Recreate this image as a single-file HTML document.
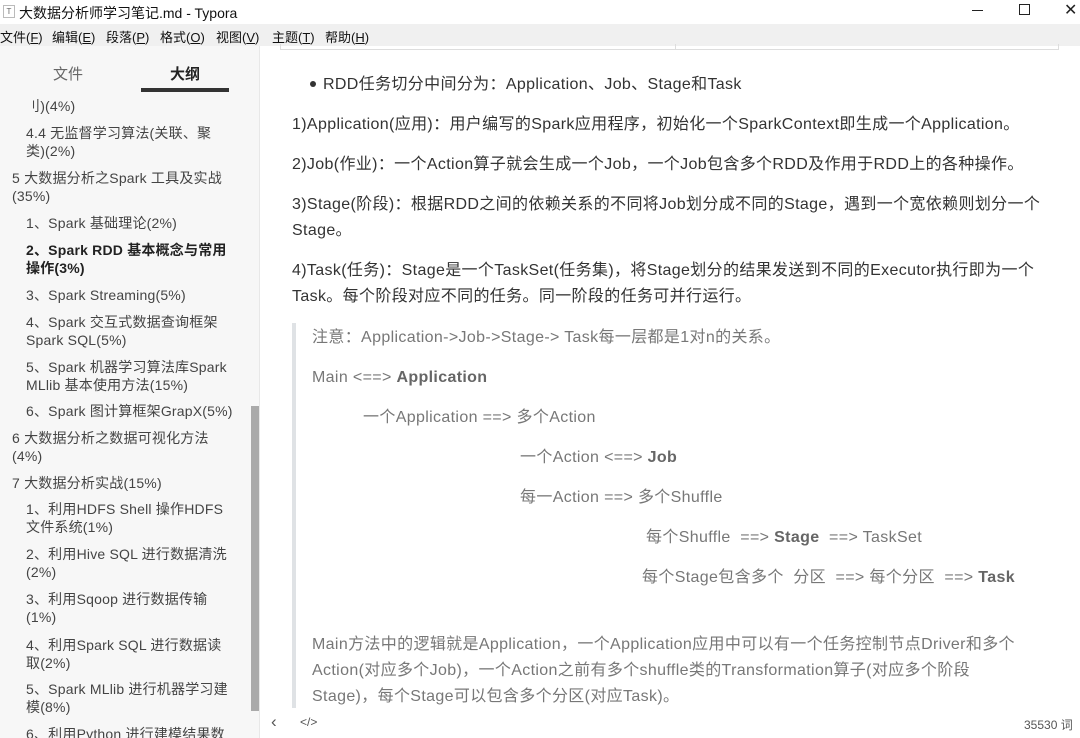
<!DOCTYPE html>
<html><head><meta charset="utf-8"><style>
*{margin:0;padding:0;box-sizing:border-box}
body{width:1080px;height:738px;overflow:hidden;background:#fff;font-family:"Liberation Sans","Noto Sans CJK SC",sans-serif;position:relative;color:#333}
.a{position:absolute;white-space:nowrap}
#title{top:0;left:0;width:1080px;height:24px;background:#fff}
#menu{top:24px;left:0;width:1080px;height:22px;background:#f0f0f0;font-size:13px;color:#111}
#side{top:46px;left:0;width:260px;height:692px;background:#f7f7f7;border-right:1px solid #e8e8e8;overflow:hidden}
.s{position:absolute;left:26px;font-size:14px;line-height:18px;color:#444;white-space:nowrap;letter-spacing:0.2px}
.s1{left:12px}
.b{font-weight:bold;color:#222}
.c{position:absolute;font-size:16px;line-height:26px;color:#333;white-space:nowrap;letter-spacing:0.35px}
.q{color:#777}
</style></head><body>
<div class="a" id="title">
 <div class="a" style="left:3px;top:5px;width:12px;height:13px;border:1px solid #bbb;font-size:8px;text-align:center;line-height:11px;color:#666">T</div>
 <div class="a" style="left:19px;top:3px;font-size:14px;color:#111">大数据分析师学习笔记.md - Typora</div>
 <div class="a" style="left:972px;top:10px;width:11px;height:1px;background:#222"></div>
 <div class="a" style="left:1019px;top:4px;width:11px;height:11px;border:1px solid #222"></div>
 <div class="a" style="left:1064px;top:0px;font-size:16px;color:#222">✕</div>
</div>
<div class="a" id="menu">
 <span class="a" style="left:0;top:3px">文件(<u>F</u>)</span>
 <span class="a" style="left:52px;top:3px">编辑(<u>E</u>)</span>
 <span class="a" style="left:106px;top:3px">段落(<u>P</u>)</span>
 <span class="a" style="left:160px;top:3px">格式(<u>O</u>)</span>
 <span class="a" style="left:216px;top:3px">视图(<u>V</u>)</span>
 <span class="a" style="left:272px;top:3px">主题(<u>T</u>)</span>
 <span class="a" style="left:325px;top:3px">帮助(<u>H</u>)</span>
</div>
<div class="a" id="side">
 <div class="a" style="left:53px;top:17px;font-size:15px;color:#666">文件</div>
 <div class="a" style="left:170px;top:17px;font-size:15px;font-weight:bold;color:#222">大纲</div>
 <div class="a" style="left:141px;top:42px;width:88px;height:4px;background:#333"></div>
 <div class="s" style="top:51px">刂)(4%)</div>
 <div class="s" style="top:78px">4.4 无监督学习算法(关联、聚<br>类)(2%)</div>
 <div class="s s1" style="top:123px">5 大数据分析之Spark 工具及实战<br>(35%)</div>
 <div class="s" style="top:168px">1、Spark 基础理论(2%)</div>
 <div class="s b" style="top:195px">2、Spark RDD 基本概念与常用<br>操作(3%)</div>
 <div class="s" style="top:240px">3、Spark Streaming(5%)</div>
 <div class="s" style="top:267px">4、Spark 交互式数据查询框架<br>Spark SQL(5%)</div>
 <div class="s" style="top:312px">5、Spark 机器学习算法库Spark<br>MLlib 基本使用方法(15%)</div>
 <div class="s" style="top:356px">6、Spark 图计算框架GrapX(5%)</div>
 <div class="s s1" style="top:383px">6 大数据分析之数据可视化方法<br>(4%)</div>
 <div class="s s1" style="top:428px">7 大数据分析实战(15%)</div>
 <div class="s" style="top:454px">1、利用HDFS Shell 操作HDFS<br>文件系统(1%)</div>
 <div class="s" style="top:499px">2、利用Hive SQL 进行数据清洗<br>(2%)</div>
 <div class="s" style="top:544px">3、利用Sqoop 进行数据传输<br>(1%)</div>
 <div class="s" style="top:590px">4、利用Spark SQL 进行数据读<br>取(2%)</div>
 <div class="s" style="top:634px">5、Spark MLlib 进行机器学习建<br>模(8%)</div>
 <div class="s" style="top:679px">6、利用Python 进行建模结果数</div>
 <div class="a" style="left:251px;top:360px;width:8px;height:305px;background:#aaa"></div>
</div>
<div class="a" style="left:280px;top:44px;width:779px;height:6px;border:1px solid #ddd;border-top:none"></div>
<div class="a" style="left:675px;top:44px;width:1px;height:6px;background:#ddd"></div>
<div class="a" style="left:310px;top:81px;width:6px;height:6px;border-radius:50%;background:#333"></div>
<div class="c" style="left:323px;top:72px">RDD任务切分中间分为：Application、Job、Stage和Task</div>
<div class="c" style="left:292px;top:112px">1)Application(应用)：用户编写的Spark应用程序，初始化一个SparkContext即生成一个Application。</div>
<div class="c" style="left:292px;top:152px">2)Job(作业)：一个Action算子就会生成一个Job，一个Job包含多个RDD及作用于RDD上的各种操作。</div>
<div class="c" style="left:292px;top:192px">3)Stage(阶段)：根据RDD之间的依赖关系的不同将Job划分成不同的Stage，遇到一个宽依赖则划分一个</div>
<div class="c" style="left:292px;top:218px">Stage。</div>
<div class="c" style="left:292px;top:258px">4)Task(任务)：Stage是一个TaskSet(任务集)，将Stage划分的结果发送到不同的Executor执行即为一个</div>
<div class="c" style="left:292px;top:284px">Task。每个阶段对应不同的任务。同一阶段的任务可并行运行。</div>
<div class="a" style="left:292px;top:323px;width:4px;height:385px;background:#dfe2e5"></div>
<div class="c q" style="left:312px;top:325px">注意：Application-&gt;Job-&gt;Stage-&gt; Task每一层都是1对n的关系。</div>
<div class="c q" style="left:312px;top:365px">Main &lt;==&gt; <b style="color:#666">Application</b></div>
<div class="c q" style="left:363px;top:405px">一个Application ==&gt; 多个Action</div>
<div class="c q" style="left:520px;top:445px">一个Action &lt;==&gt; <b style="color:#666">Job</b></div>
<div class="c q" style="left:520px;top:485px">每一Action ==&gt; 多个Shuffle</div>
<div class="c q" style="left:646px;top:525px">每个Shuffle&nbsp; ==&gt; <b style="color:#666">Stage</b>&nbsp; ==&gt; TaskSet</div>
<div class="c q" style="left:642px;top:565px">每个Stage包含多个&nbsp; 分区&nbsp; ==&gt; 每个分区&nbsp; ==&gt; <b style="color:#666">Task</b></div>
<div class="c q" style="left:312px;top:632px">Main方法中的逻辑就是Application，一个Application应用中可以有一个任务控制节点Driver和多个</div>
<div class="c q" style="left:312px;top:658px">Action(对应多个Job)，一个Action之前有多个shuffle类的Transformation算子(对应多个阶段</div>
<div class="c q" style="left:312px;top:684px">Stage)，每个Stage可以包含多个分区(对应Task)。</div>
<div class="a" style="left:261px;top:709px;width:819px;height:29px;background:#fff"></div>
<div class="a" style="left:271px;top:712px;font-size:17px;color:#555">‹</div>
<div class="a" style="left:300px;top:715px;font-size:12px;color:#555">&lt;/&gt;</div>
<div class="a" style="left:1024px;top:716px;font-size:12px;color:#555">35530 词</div>
</body></html>
